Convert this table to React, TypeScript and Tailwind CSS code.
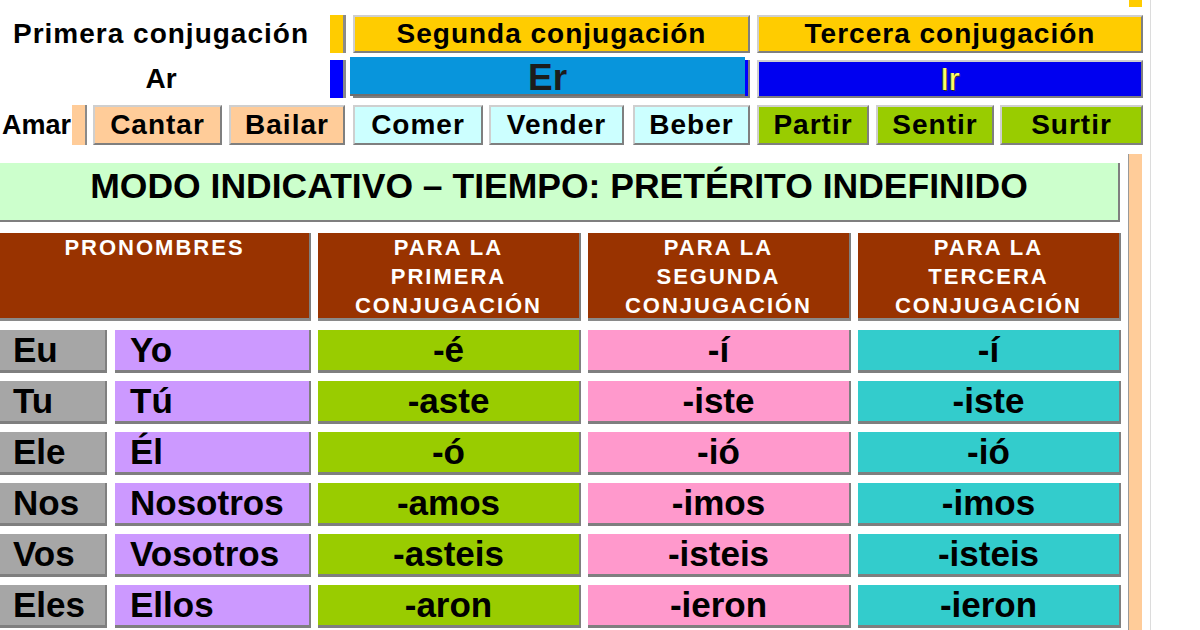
const topCell =
  "flex items-center justify-center border-t-2 border-l-2 border-t-[#cfcfcf] border-l-[#cfcfcf] border-r-2 border-b-2 border-r-[#7f7f7f] border-b-[#7f7f7f] text-[28px] font-bold tracking-[1px] text-black";
const cell =
  "flex items-center border-r-2 border-b-[3px] border-r-[#7f7f7f] border-b-[#7f7f7f] text-[35px] font-bold text-black";

type Row = { pt: string; es: string; a: string; b: string; c: string };

const rows: Row[] = [
  { pt: "Eu", es: "Yo", a: "-é", b: "-í", c: "-í" },
  { pt: "Tu", es: "Tú", a: "-aste", b: "-iste", c: "-iste" },
  { pt: "Ele", es: "Él", a: "-ó", b: "-ió", c: "-ió" },
  { pt: "Nos", es: "Nosotros", a: "-amos", b: "-imos", c: "-imos" },
  { pt: "Vos", es: "Vosotros", a: "-asteis", b: "-isteis", c: "-isteis" },
  { pt: "Eles", es: "Ellos", a: "-aron", b: "-ieron", c: "-ieron" },
];

const HeaderCell: React.FC<{ lines: string[]; className?: string }> = ({ lines, className }) => (
  <div
    className={`flex flex-col items-center border-r-2 border-b-[3px] border-r-[#7f7f7f] border-b-[#8a8a8a] bg-[#993300] text-[22px] font-bold leading-[29px] tracking-[2px] text-white ${className ?? ""}`}
  >
    {lines.map((l) => (
      <span key={l}>{l}</span>
    ))}
  </div>
);

const App: React.FC = () => {
  return (
    <div className="h-[630px] w-[1151px] overflow-hidden border-r border-r-[#dcdcdc] bg-white font-['Liberation_Sans',Arial,sans-serif]">
      {/** little block at the very top **/}
      <div className="flex h-[7px]">
        <div className="ml-[1129px] w-[13px] bg-[#ffcc00]" />
      </div>

      {/** row 1: conjugaciones **/}
      <div className="mt-[8px] flex h-[38px]">
        <div className="flex w-[322px] items-center justify-center text-[28px] font-bold tracking-[1px] text-black">
          Primera conjugación
        </div>
        <div className="ml-[8px] w-[16px] border-r-[3px] border-r-[#8a8a8a] bg-[#ffcc00]" />
        <div className={`${topCell} ml-[7px] w-[397px] bg-[#ffcc00]`}>Segunda conjugación</div>
        <div className={`${topCell} ml-[7px] w-[386px] bg-[#ffcc00]`}>Tercera conjugación</div>
      </div>

      {/** row 2: Ar / Er / Ir **/}
      <div className="mt-[4px] flex h-[41px]">
        <div className="flex w-[322px] items-center justify-center pt-[2px] text-[28px] font-bold text-black">Ar</div>
        <div className="ml-[8px] mt-[3px] w-[16px] border-r-[3px] border-r-[#8a8a8a] bg-[#0000ff]" />
        <div className="relative ml-[7px] mt-[3px] w-[397px] border-r-2 border-b-2 border-r-[#7f7f7f] border-b-[#7f7f7f] bg-[#0000ff]">
          <div className="absolute -left-[3px] -top-[3px] bottom-0 flex w-[395px] items-center justify-center border-b-2 border-b-[#6f6f6f] bg-[#0895dc] pt-[4px] text-[37px] font-bold text-[#1c1c1c]">
            Er
          </div>
        </div>
        <div
          className={`${topCell} ml-[7px] mt-[3px] w-[386px] bg-[#0000f0] !text-[32px] !font-normal !tracking-normal !text-[#ffff66] [text-shadow:1px_1px_0_#333,-1px_0_0_#555]`}
        >
          Ir
        </div>
      </div>

      {/** row 3: verbos **/}
      <div className="mt-[7px] flex h-[40px]">
        <div className="flex w-[71px] items-center justify-end text-[27px] font-bold text-black">Amar</div>
        <div className="ml-[1px] w-[15px] border-r-2 border-r-[#8a8a8a] bg-[#ffcc99]" />
        <div className={`${topCell} ml-[6px] w-[129px] bg-[#ffcc99]`}>Cantar</div>
        <div className={`${topCell} ml-[7px] w-[116px] bg-[#ffcc99]`}>Bailar</div>
        <div className={`${topCell} ml-[8px] w-[130px] bg-[#ccffff]`}>Comer</div>
        <div className={`${topCell} ml-[6px] w-[135px] bg-[#ccffff]`}>Vender</div>
        <div className={`${topCell} ml-[9px] w-[117px] bg-[#ccffff]`}>Beber</div>
        <div className={`${topCell} ml-[7px] w-[112px] bg-[#99cc00]`}>Partir</div>
        <div className={`${topCell} ml-[7px] w-[118px] bg-[#99cc00]`}>Sentir</div>
        <div className={`${topCell} ml-[6px] w-[143px] bg-[#99cc00]`}>Surtir</div>
      </div>

      {/** tabla **/}
      <div className="mt-[9px] flex h-[476px]">
        <div className="w-[1121px]">
          <div className="mt-[9px] flex h-[59px] w-[1120px] justify-center border-r-2 border-b-2 border-r-[#7f7f7f] border-b-[#7f7f7f] bg-[#ccffcc] pt-[3px] text-[35.5px] font-bold leading-[40px] text-black">
            MODO INDICATIVO – TIEMPO: PRETÉRITO INDEFINIDO
          </div>

          <div className="mt-[11px] flex h-[88px]">
            <HeaderCell className="w-[311px]" lines={["PRONOMBRES"]} />
            <HeaderCell className="ml-[7px] w-[263px]" lines={["PARA LA", "PRIMERA", "CONJUGACIÓN"]} />
            <HeaderCell className="ml-[7px] w-[263px]" lines={["PARA LA", "SEGUNDA", "CONJUGACIÓN"]} />
            <HeaderCell className="ml-[7px] w-[263px]" lines={["PARA LA", "TERCERA", "CONJUGACIÓN"]} />
          </div>

          <div className="mt-[9px] flex flex-col gap-[8px]">
            {rows.map((r) => (
              <div key={r.pt} className="flex h-[43px]">
                <div className={`${cell} w-[107px] bg-[#a6a6a6] pl-[13px]`}>{r.pt}</div>
                <div className={`${cell} ml-[8px] w-[196px] bg-[#cc99ff] pl-[15px]`}>{r.es}</div>
                <div className={`${cell} ml-[7px] w-[263px] justify-center bg-[#99cc00]`}>{r.a}</div>
                <div className={`${cell} ml-[7px] w-[263px] justify-center bg-[#ff99cc]`}>{r.b}</div>
                <div className={`${cell} ml-[7px] w-[263px] justify-center bg-[#33cccc]`}>{r.c}</div>
              </div>
            ))}
          </div>
        </div>
        <div className="ml-[7px] w-[14px] border-l border-l-[#9a9a9a] bg-[#ffcc99]" />
      </div>
    </div>
  );
};

export default App;
